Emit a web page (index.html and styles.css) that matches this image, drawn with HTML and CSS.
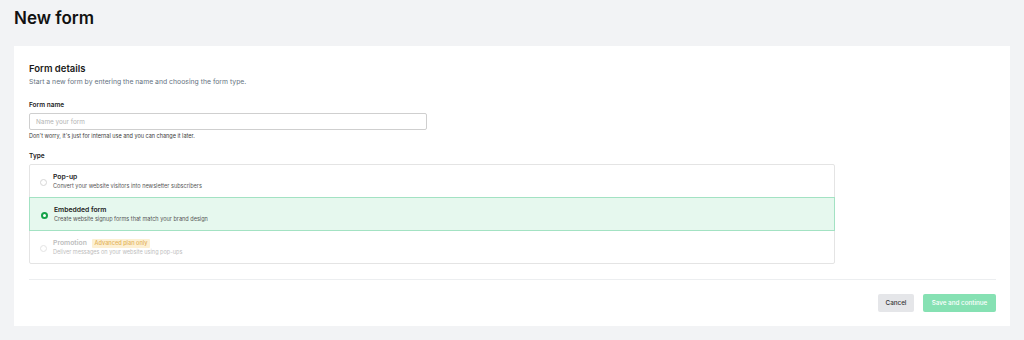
FILE: index.html
```html
<!DOCTYPE html>
<html lang="en">
<head>
    <meta charset="UTF-8">
    <title>New form</title>
    <link rel="stylesheet" href="styles.css">
</head>
<body>
    <h1 class="page-title">New form</h1>

    <div class="card">
        <h2 class="card-title">Form details</h2>
        <p class="card-sub">Start a new form by entering the name and choosing the form type.</p>

        <label class="field-label" for="form-name">Form name</label>
        <input class="text-input" id="form-name" type="text" placeholder="Name your form">
        <p class="hint">Don't worry, it's just for internal use and you can change it later.</p>

        <div class="field-label type-label">Type</div>
        <div class="options">
            <div class="option">
                <span class="radio"></span>
                <div>
                    <div class="opt-title">Pop-up</div>
                    <div class="opt-desc">Convert your website visitors into newsletter subscribers</div>
                </div>
            </div>
            <div class="option selected">
                <span class="radio checked"></span>
                <div>
                    <div class="opt-title">Embedded form</div>
                    <div class="opt-desc">Create website signup forms that match your brand design</div>
                </div>
            </div>
            <div class="option disabled">
                <span class="radio"></span>
                <div>
                    <div class="opt-title">Promotion <span class="badge">Advanced plan only</span></div>
                    <div class="opt-desc">Deliver messages on your website using pop-ups</div>
                </div>
            </div>
        </div>

        <div class="footer">
            <button class="btn btn-cancel">Cancel</button>
            <button class="btn btn-save">Save and continue</button>
        </div>
    </div>
</body>
</html>
```

FILE: styles.css
```css
body {
    margin: 0;
    padding: 6px 14px 14px;
    background-color: #f2f3f5;
    font-family: Inter, "Noto Sans", sans-serif;
    color: #1b1b1b;
}

.page-title {
    margin: 0 0 16px;
    font-size: 17px;
    font-weight: 600;
    line-height: 24px;
    color: #111;
}

.card {
    background-color: #fff;
    padding: 16px 14px 14px 15px;
}

.card-title {
    margin: 0;
    font-size: 9.5px;
    font-weight: 600;
    line-height: 13px;
    color: #1a1a1a;
}

.card-sub {
    margin: 2px 0 14px;
    font-size: 6.85px;
    line-height: 10px;
    color: #667382;
}

.field-label {
    display: block;
    font-size: 6.5px;
    font-weight: 600;
    line-height: 9px;
    color: #222;
    margin-bottom: 3px;
}

.text-input {
    display: block;
    box-sizing: border-box;
    width: 398px;
    height: 17px;
    margin: 0;
    padding: 0 6px;
    border: 1px solid #cfcfcf;
    border-radius: 2px;
    font-family: inherit;
    font-size: 6.4px;
}

.text-input::placeholder {
    color: #b3b3b3;
}

.hint {
    margin: 2px 0 0;
    font-size: 5.5px;
    line-height: 8px;
    color: #3a3a3a;
}

.type-label {
    margin-top: 12px;
    margin-bottom: 3px;
}

.options {
    width: 804px;
    border: 1px solid #e4e4e4;
    border-radius: 2px;
}

.option {
    display: flex;
    align-items: center;
    gap: 6px;
    height: 32px;
    padding: 0 10px;
    border-bottom: 1px solid #e4e4e4;
}

.option:last-child {
    border-bottom: none;
}

.option.selected {
    background-color: #e6f8ee;
    border: 1px solid #a3e2c3;
    margin: -1px -1px 0;
    padding: 0 11px;
}

.radio {
    box-sizing: border-box;
    width: 7px;
    height: 7px;
    border-radius: 50%;
    border: 1px solid #d6d6d6;
    background: #fff;
    flex-shrink: 0;
    margin-top: 3px;
}

.radio.checked {
    border: 2px solid #16a34a;
}

.opt-title {
    font-size: 6.8px;
    font-weight: 600;
    line-height: 10px;
    color: #222;
}

.opt-desc {
    font-size: 5.55px;
    line-height: 9px;
    color: #555;
}

.disabled .opt-title,
.disabled .opt-desc {
    color: #bdbdbd;
}

.disabled .radio {
    border-color: #e3e3e3;
}

.badge {
    display: inline-block;
    margin-left: 3px;
    padding: 0 3px;
    font-size: 5.6px;
    font-weight: 500;
    line-height: 9px;
    color: #e3b35c;
    background-color: #fdf0d3;
    border-radius: 1px;
}

.footer {
    margin-top: 15px;
    border-top: 1px solid #eceef0;
    padding-top: 14px;
    display: flex;
    justify-content: flex-end;
    gap: 9px;
}

.btn {
    height: 18px;
    border: none;
    border-radius: 2px;
    font-family: inherit;
    font-size: 6.3px;
    font-weight: 500;
    padding: 0;
}

.btn-cancel {
    background-color: #e5e6e9;
    color: #333;
    width: 36px;
}

.btn-save {
    background-color: #86e1b3;
    color: #fff;
    width: 73px;
}
```
